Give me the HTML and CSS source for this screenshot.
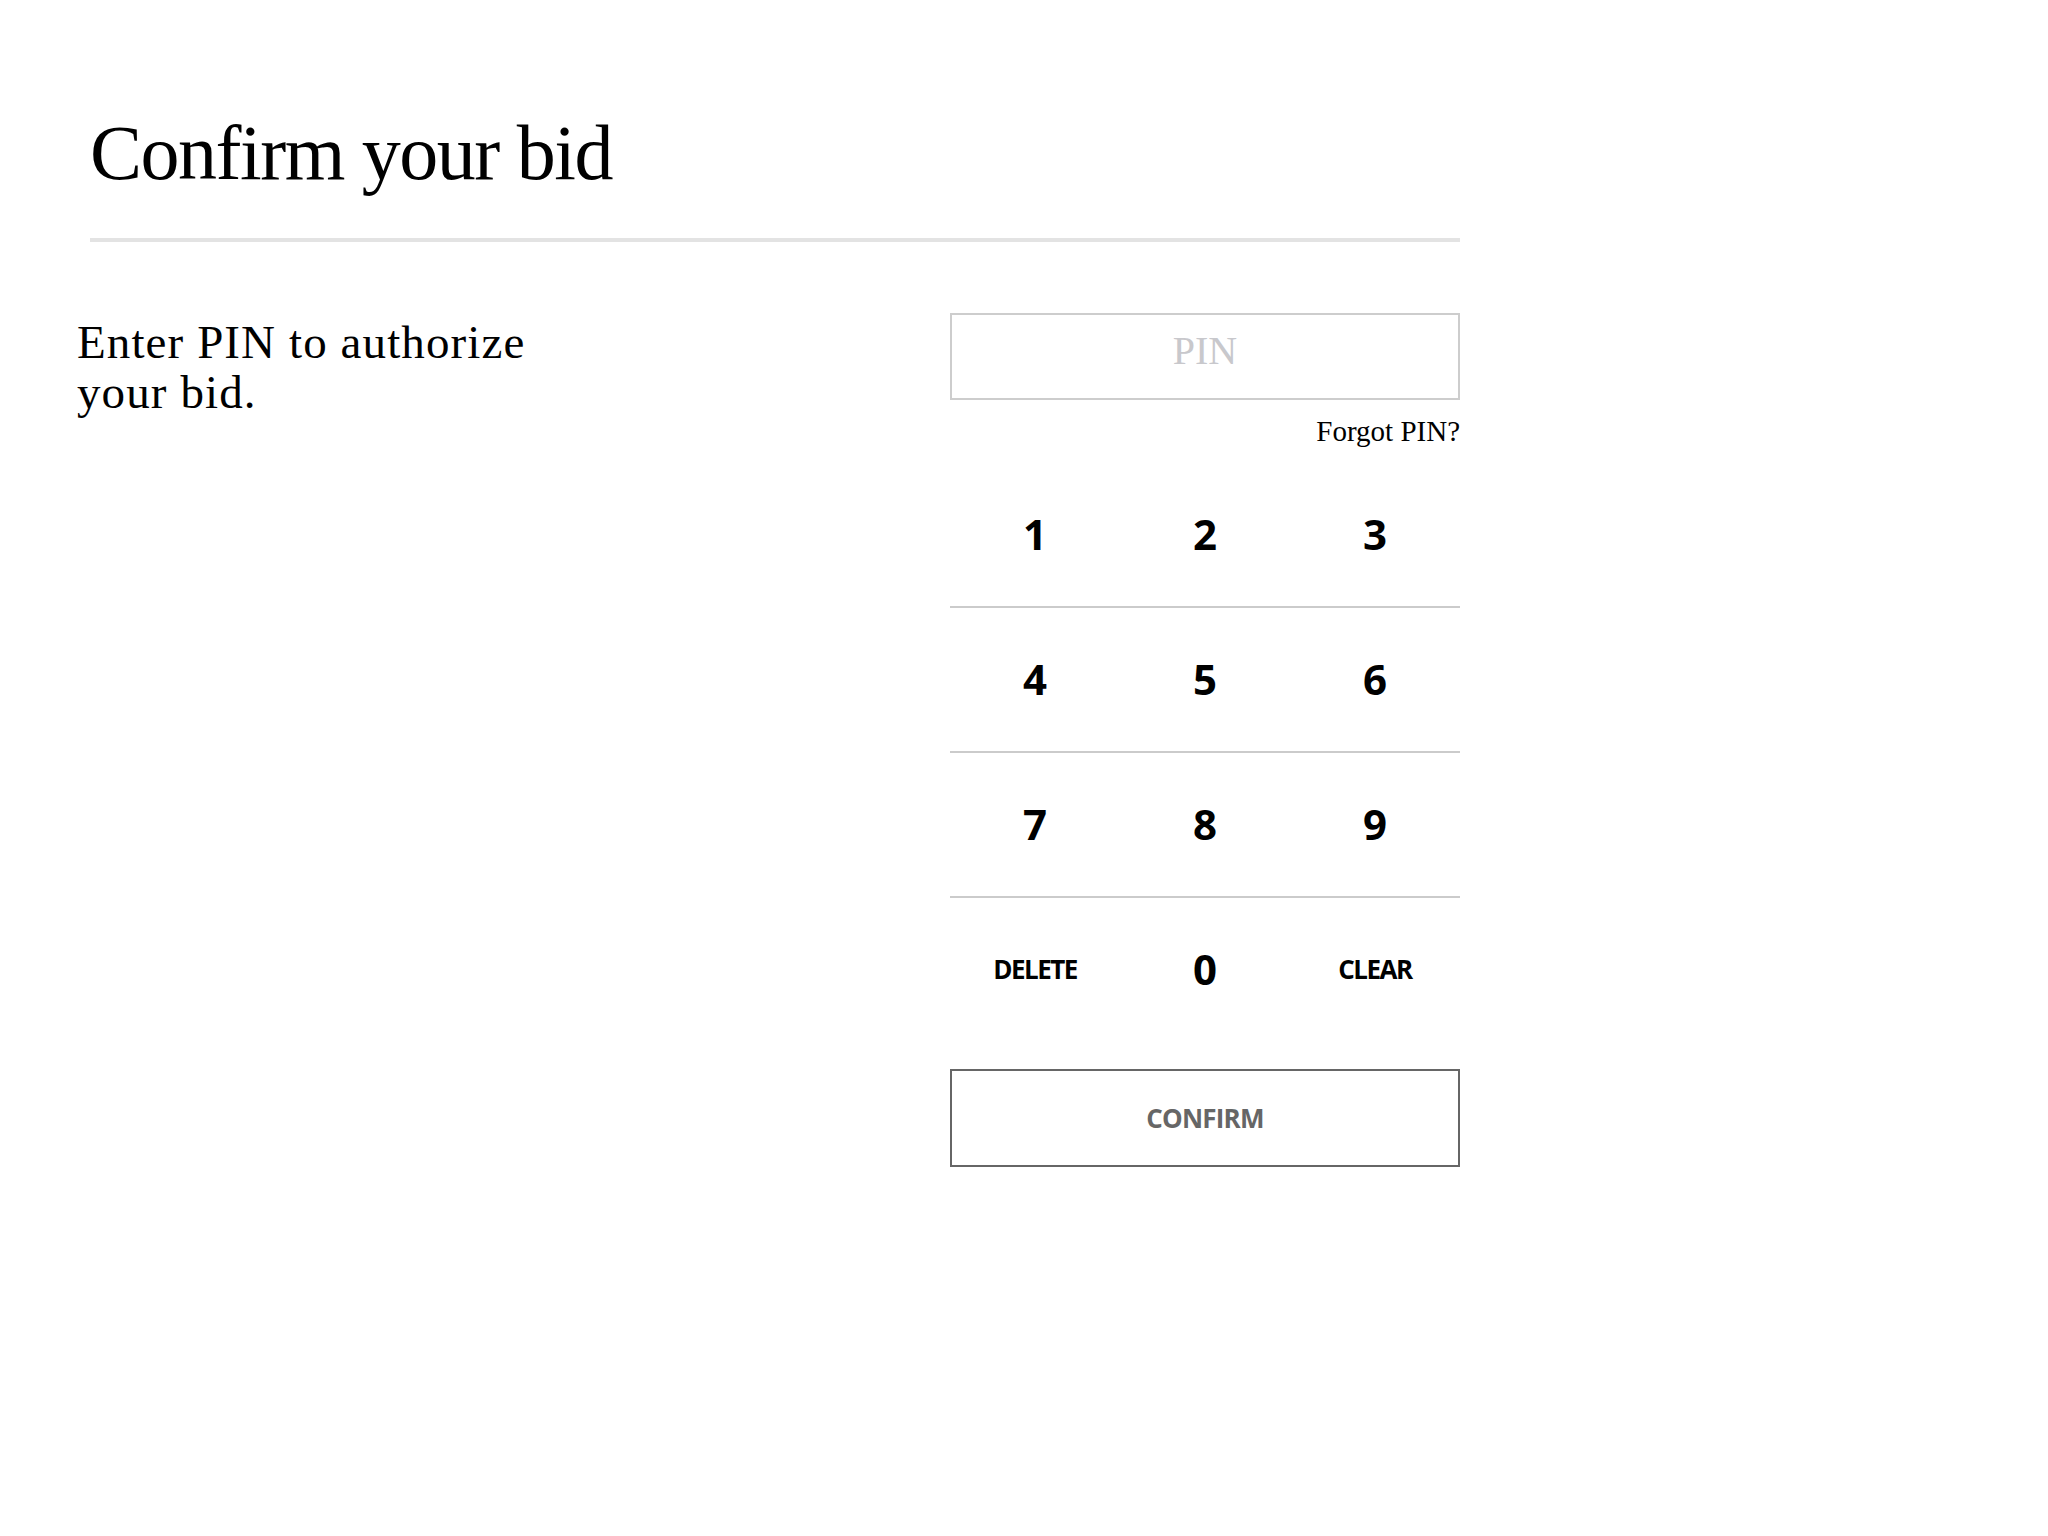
FILE: index.html
```html
<!DOCTYPE html>
<html lang="en">
<head>
<meta charset="utf-8">
<title>Confirm your bid</title>
<link rel="stylesheet" href="styles.css">
</head>
<body>
<main class="page">
  <header class="page-header">
    <h1 class="title">Confirm your bid</h1>
  </header>
  <section class="content">
    <p class="prompt">Enter PIN to authorize<br>your bid.</p>
    <div class="pin-panel">
      <div class="pin-field"><span class="placeholder">PIN</span></div>
      <a class="forgot">Forgot PIN?</a>
      <div class="keypad">
        <div class="key-row">
          <button class="key">1</button>
          <button class="key">2</button>
          <button class="key">3</button>
        </div>
        <div class="key-row">
          <button class="key">4</button>
          <button class="key">5</button>
          <button class="key">6</button>
        </div>
        <div class="key-row">
          <button class="key">7</button>
          <button class="key">8</button>
          <button class="key">9</button>
        </div>
        <div class="key-row">
          <button class="key key-word">DELETE</button>
          <button class="key">0</button>
          <button class="key key-word">CLEAR</button>
        </div>
      </div>
      <button class="confirm">CONFIRM</button>
    </div>
  </section>
</main>
</body>
</html>
```

FILE: styles.css
```css
html, body {
  margin: 0;
  padding: 0;
  background: #ffffff;
  color: #000000;
}

.page {
  width: 1383px;
  padding-left: 77px;
}

.page-header {
  margin-left: 13px;
  padding-top: 114px;
  padding-bottom: 46px;
  border-bottom: 4px solid #e3e3e3;
}

.title {
  margin: 0;
  font-family: "Liberation Serif", serif;
  font-weight: 400;
  font-size: 78px;
  line-height: 78px;
  letter-spacing: -1.5px;
}

.content {
  display: flex;
  justify-content: space-between;
  align-items: flex-start;
  margin-top: 71px;
}

.prompt {
  margin: 0;
  padding-top: 4px;
  font-family: "Liberation Serif", serif;
  font-size: 47px;
  line-height: 50px;
  letter-spacing: 1.1px;
}

.pin-panel {
  width: 510px;
  display: flex;
  flex-direction: column;
}

.pin-field {
  box-sizing: border-box;
  height: 87px;
  border: 2px solid #cdcdcd;
  padding-bottom: 12px;
  display: flex;
  align-items: center;
  justify-content: center;
  font-family: "Liberation Serif", serif;
  font-size: 40px;
  line-height: 40px;
}

.placeholder {
  color: #c8c8cc;
}

.forgot {
  align-self: flex-end;
  margin-top: 17px;
  font-family: "Liberation Serif", serif;
  font-size: 29px;
  line-height: 28px;
  color: #000000;
  cursor: pointer;
}

.keypad {
  margin-top: 18px;
  display: flex;
  flex-direction: column;
}

.key-row {
  display: grid;
  grid-template-columns: repeat(3, 1fr);
  height: 143px;
  border-bottom: 2px solid #cbcbcb;
}

.key-row:last-child {
  border-bottom: 0;
}

.key {
  margin: 0;
  padding: 0 0 2px;
  border: 0;
  background: transparent;
  color: #000000;
  display: flex;
  align-items: center;
  justify-content: center;
  font-family: "Open Sans", sans-serif;
  font-weight: 700;
  font-size: 42px;
  line-height: 42px;
  cursor: pointer;
}

.key-word {
  font-size: 26px;
  line-height: 26px;
  font-weight: 700;
  letter-spacing: -1.5px;
}

.confirm {
  margin-top: 28px;
  box-sizing: border-box;
  height: 98px;
  border: 2px solid #666666;
  background: #ffffff;
  color: #666666;
  font-family: "Open Sans", sans-serif;
  font-weight: 700;
  font-size: 26px;
  letter-spacing: -0.8px;
  cursor: pointer;
}
```
